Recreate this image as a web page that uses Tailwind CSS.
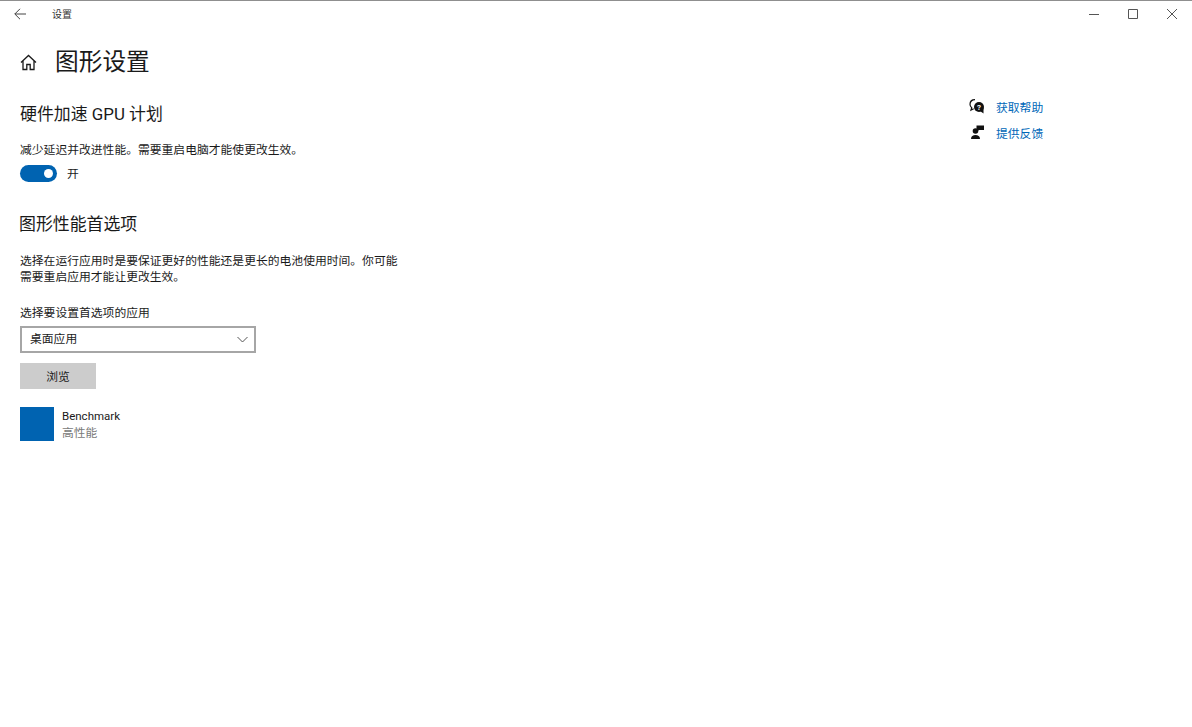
<!DOCTYPE html>
<html lang="zh-CN">
<head>
  <meta charset="UTF-8" />
  <title>设置</title>
  <script src="https://cdn.jsdelivr.net/npm/@tailwindcss/browser@4"></script>
</head>
<body class="w-[1192px] h-[727px] overflow-hidden bg-white text-[#1a1a1a] font-['Roboto','Noto_Sans_CJK_SC',sans-serif]">

<!-- title bar -->
<div class="h-[29px] border-t border-[#8f8f8f] flex items-center">
  <svg class="ml-[14px] w-[12px] h-[12px] mb-[2px]" viewBox="0 0 12 12" fill="none" stroke="#444" stroke-width="1"><path d="M6 .8 .8 6 6 11.200M.8 6H12"/></svg>
  <span class="ml-[26px] text-[10px] leading-[14px] text-[#333]">设置</span>
  <div class="ml-auto flex items-center mr-[15px] gap-[29px] mb-[2px]">
    <svg class="w-[10px] h-[10px]" viewBox="0 0 10 10" stroke="#555" fill="none"><path d="M0 5.500h10"/></svg>
    <svg class="w-[10px] h-[10px]" viewBox="0 0 10 10" stroke="#555" fill="none"><path d="M.5.500h9v9h-9z"/></svg>
    <svg class="w-[10px] h-[10px]" viewBox="0 0 10 10" stroke="#555" fill="none"><path d="M0 0l10 10M10 0 0 10"/></svg>
  </div>
</div>

<div class="flex">
  <main class="w-[960px] pl-[20px]">
    <div class="flex items-center h-[32px] mt-[17px]">
      <svg class="w-[17px] h-[17px]" viewBox="0 0 17 17" fill="none" stroke="#1a1a1a" stroke-width="1.300"><path d="M1 8.500 8.500 1.500 16 8.500M3 7v8.500h3.800v-5h3.400v5H14V7"/></svg>
      <h1 class="ml-[18px] text-[23.7px] leading-[32px]">图形设置</h1>
    </div>

    <h2 class="mt-[24px] text-[16.9px] leading-[24px]">硬件加速 GPU 计划</h2>
    <p class="mt-[15px] text-[11.8px] leading-[18px]">减少延迟并改进性能。需要重启电脑才能使更改生效。</p>
    <div class="flex items-start mt-[6px]">
      <div class="w-[37px] h-[17px] rounded-full bg-[#0063b1] flex items-center justify-end pr-[4px]">
        <div class="w-[9px] h-[9px] rounded-full bg-white"></div>
      </div>
      <span class="ml-[10px] text-[11.8px] leading-[18px]">开</span>
    </div>

    <h2 class="mt-[29px] -ml-[1px] text-[16.9px] leading-[24px]">图形性能首选项</h2>
    <p class="mt-[17px] w-[385px] text-[11.8px] leading-[16px]">选择在运行应用时是要保证更好的性能还是更长的电池使用时间。你可能需要重启应用才能让更改生效。</p>
    <p class="mt-[19px] text-[11.8px] leading-[18px]">选择要设置首选项的应用</p>
    <div class="mt-[4px] w-[236px] h-[27px] border-2 border-[#a6a6a6] flex items-center pl-[8px] pr-[6px]">
      <span class="text-[11.8px]">桌面应用</span>
      <svg class="ml-auto w-[11px] h-[7px]" viewBox="0 0 11 7" fill="none" stroke="#555"><path d="M.5 1 5.500 6l5-5"/></svg>
    </div>
    <button class="block mt-[10px] w-[76px] h-[26px] pt-[3px] bg-[#cccccc] text-[11.8px]">浏览</button>
    <div class="flex items-start mt-[18px]">
      <div class="w-[34px] h-[34px] bg-[#0063b1]"></div>
      <div class="ml-[8px] pt-[1px]">
        <div class="text-[11.5px] leading-[17px]">Benchmark</div>
        <div class="text-[11.8px] leading-[17px] text-[#7a7a7a]">高性能</div>
      </div>
    </div>
  </main>

  <aside class="pt-[66px] pl-[9px]">
    <a class="flex items-center h-[26px] text-[11.8px] text-[#0067b8]">
      <svg class="w-[16px] h-[16px] mb-[2px]" viewBox="0 0 16 16"><path d="M6 .7C3 .7 1 2.700 1 5.300c0 1.500.7 2.700 1.700 3.500L2 11l2.700-1.300" fill="none" stroke="#111" stroke-width="1.200"/><circle cx="10" cy="8" r="5" fill="#111"/><path d="M11 12l3.500 2.500V9z" fill="#111"/><text x="10" y="11" font-size="8" font-weight="700" text-anchor="middle" fill="#fff">?</text></svg>
      <span class="ml-[11px] mt-[2px]">获取帮助</span>
    </a>
    <a class="flex items-center h-[26px] text-[11.8px] text-[#0067b8]">
      <svg class="w-[16px] h-[16px] mb-[2px]" viewBox="0 0 16 16" fill="#111"><circle cx="6.500" cy="6" r="2.800"/><path d="M2 14c0-3 2-4 4.500-4s4.500 1 4.500 4z"/><path d="M7.500.5H15V5h-5L7.500 7z"/></svg>
      <span class="ml-[11px] mt-[2px]">提供反馈</span>
    </a>
  </aside>
</div>

</body>
</html>
